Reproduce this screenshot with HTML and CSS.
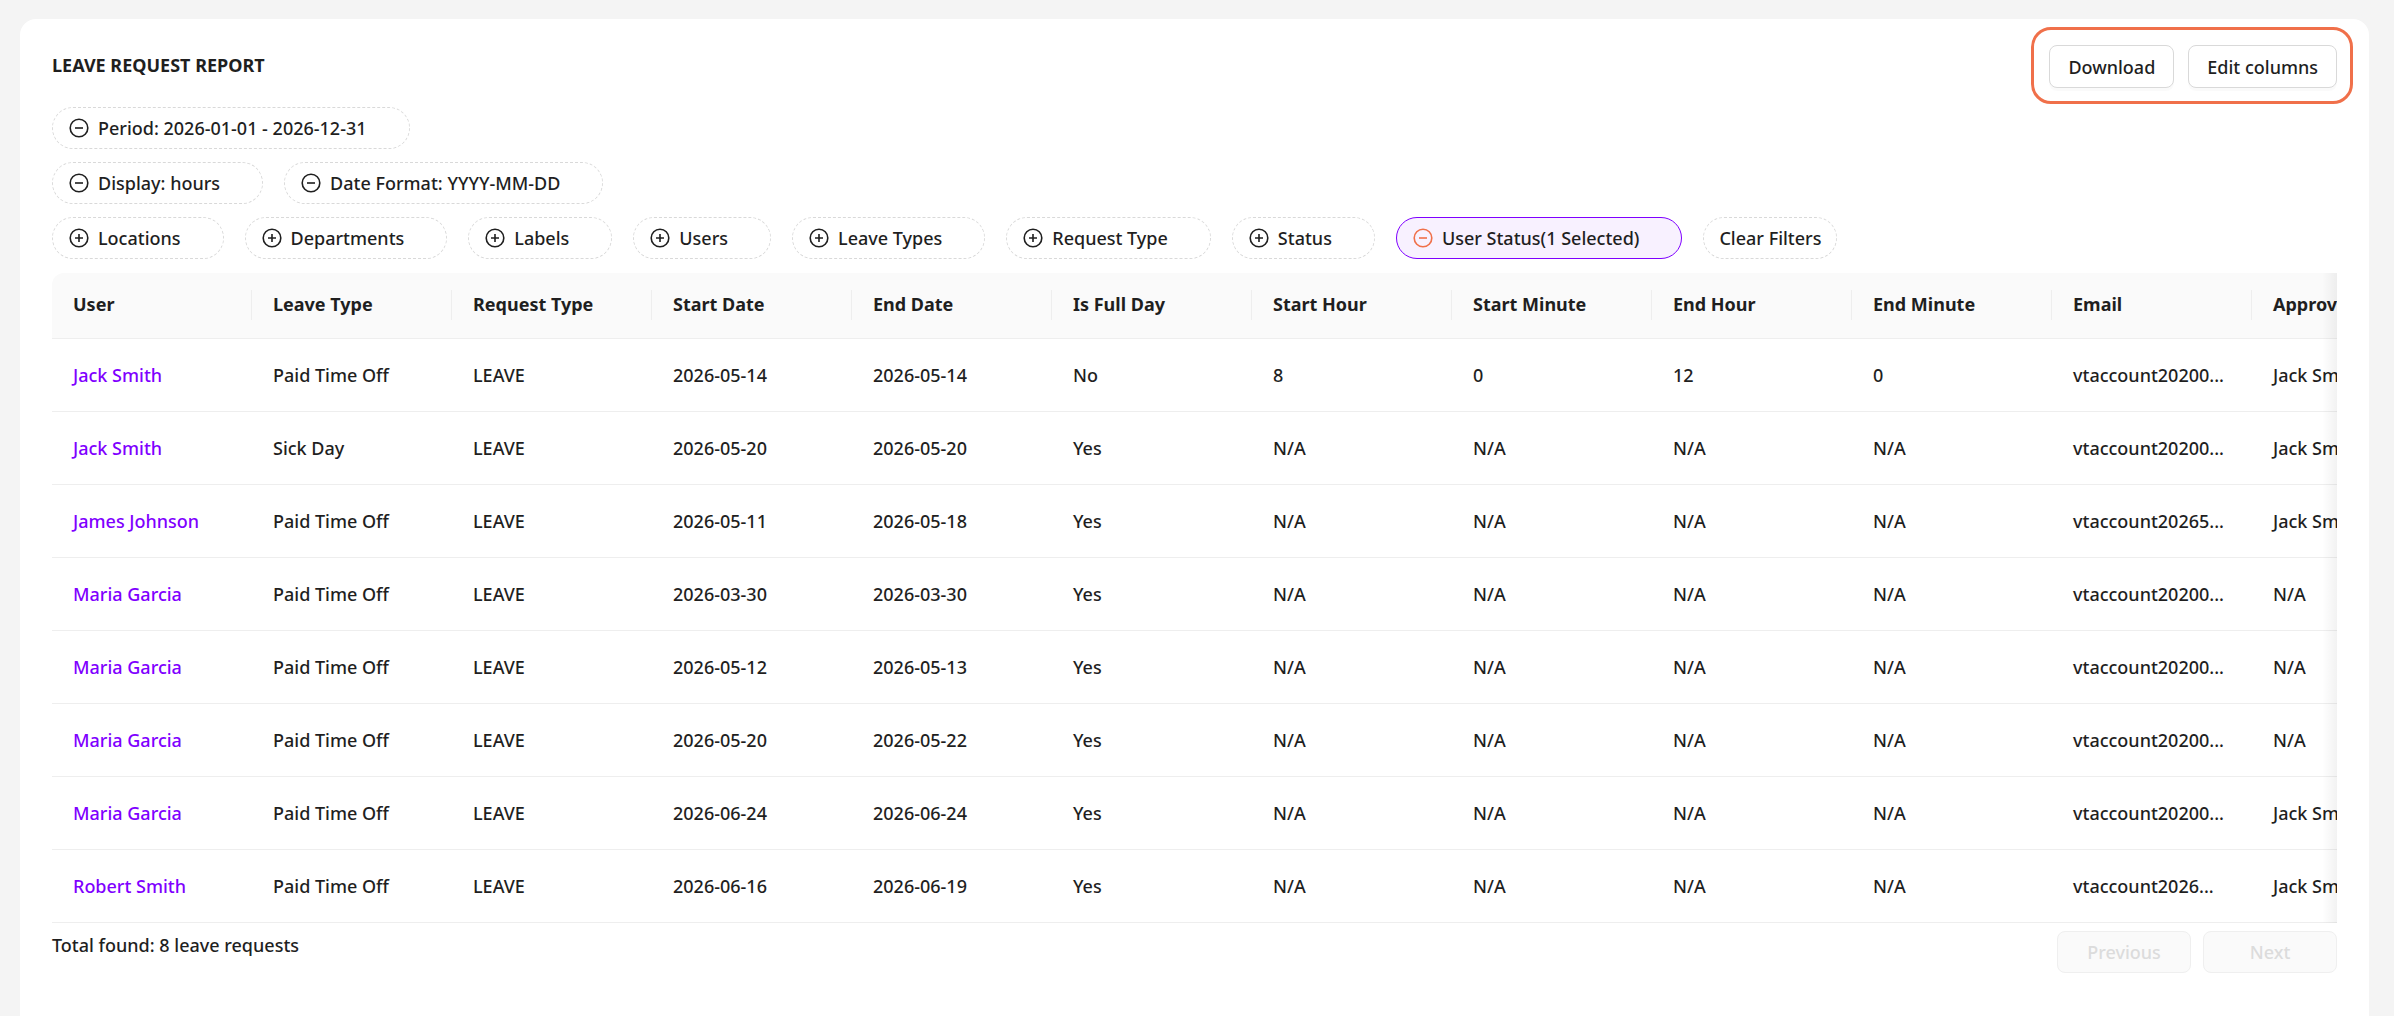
FILE: index.html
```html
<!DOCTYPE html>
<html lang="en">
<head>
<meta charset="utf-8">
<meta name="viewport" content="width=device-width, initial-scale=1">
<title>Leave request report</title>
<link rel="stylesheet" href="styles.css">
</head>
<body>
<svg class="sprite" aria-hidden="true">
  <symbol id="minus" viewBox="0 0 20 20"><circle cx="10" cy="10" r="8.8"/><path d="M6 10h8"/></symbol>
  <symbol id="plus" viewBox="0 0 20 20"><circle cx="10" cy="10" r="8.8"/><path d="M6 10h8M10 6v8"/></symbol>
</svg>
<main class="card">
  <header class="card-header">
    <h1 class="title">LEAVE REQUEST REPORT</h1>
    <div class="actions">
      <button type="button" class="btn">Download</button>
      <button type="button" class="btn">Edit columns</button>
    </div>
  </header>

  <section class="filters" aria-label="Filters">
    <div class="filter-row">
      <button type="button" class="pill"><svg class="icon"><use href="#minus"/></svg>Period: 2026-01-01 - 2026-12-31</button>
    </div>
    <div class="filter-row">
      <button type="button" class="pill"><svg class="icon"><use href="#minus"/></svg>Display: hours</button>
      <button type="button" class="pill"><svg class="icon"><use href="#minus"/></svg>Date Format: YYYY-MM-DD</button>
    </div>
    <div class="filter-row">
      <button type="button" class="pill"><svg class="icon"><use href="#plus"/></svg>Locations</button>
      <button type="button" class="pill"><svg class="icon"><use href="#plus"/></svg>Departments</button>
      <button type="button" class="pill"><svg class="icon"><use href="#plus"/></svg>Labels</button>
      <button type="button" class="pill"><svg class="icon"><use href="#plus"/></svg>Users</button>
      <button type="button" class="pill"><svg class="icon"><use href="#plus"/></svg>Leave Types</button>
      <button type="button" class="pill"><svg class="icon"><use href="#plus"/></svg>Request Type</button>
      <button type="button" class="pill"><svg class="icon"><use href="#plus"/></svg>Status</button>
      <button type="button" class="pill pill-active"><svg class="icon"><use href="#minus"/></svg>User Status(1 Selected)</button>
      <button type="button" class="pill pill-clear">Clear Filters</button>
    </div>
  </section>

  <div class="table-wrap">
    <div class="table-scroll">
      <table class="report">
        <thead>
          <tr><th scope="col">User</th><th scope="col">Leave Type</th><th scope="col">Request Type</th><th scope="col">Start Date</th><th scope="col">End Date</th><th scope="col">Is Full Day</th><th scope="col">Start Hour</th><th scope="col">Start Minute</th><th scope="col">End Hour</th><th scope="col">End Minute</th><th scope="col">Email</th><th scope="col">Approver</th></tr>
        </thead>
        <tbody>
          <tr><td><a href="#">Jack Smith</a></td><td>Paid Time Off</td><td>LEAVE</td><td>2026-05-14</td><td>2026-05-14</td><td>No</td><td>8</td><td>0</td><td>12</td><td>0</td><td>vtaccount20200...</td><td>Jack Smith</td></tr>
          <tr><td><a href="#">Jack Smith</a></td><td>Sick Day</td><td>LEAVE</td><td>2026-05-20</td><td>2026-05-20</td><td>Yes</td><td>N/A</td><td>N/A</td><td>N/A</td><td>N/A</td><td>vtaccount20200...</td><td>Jack Smith</td></tr>
          <tr><td><a href="#">James Johnson</a></td><td>Paid Time Off</td><td>LEAVE</td><td>2026-05-11</td><td>2026-05-18</td><td>Yes</td><td>N/A</td><td>N/A</td><td>N/A</td><td>N/A</td><td>vtaccount20265...</td><td>Jack Smith</td></tr>
          <tr><td><a href="#">Maria Garcia</a></td><td>Paid Time Off</td><td>LEAVE</td><td>2026-03-30</td><td>2026-03-30</td><td>Yes</td><td>N/A</td><td>N/A</td><td>N/A</td><td>N/A</td><td>vtaccount20200...</td><td>N/A</td></tr>
          <tr><td><a href="#">Maria Garcia</a></td><td>Paid Time Off</td><td>LEAVE</td><td>2026-05-12</td><td>2026-05-13</td><td>Yes</td><td>N/A</td><td>N/A</td><td>N/A</td><td>N/A</td><td>vtaccount20200...</td><td>N/A</td></tr>
          <tr><td><a href="#">Maria Garcia</a></td><td>Paid Time Off</td><td>LEAVE</td><td>2026-05-20</td><td>2026-05-22</td><td>Yes</td><td>N/A</td><td>N/A</td><td>N/A</td><td>N/A</td><td>vtaccount20200...</td><td>N/A</td></tr>
          <tr><td><a href="#">Maria Garcia</a></td><td>Paid Time Off</td><td>LEAVE</td><td>2026-06-24</td><td>2026-06-24</td><td>Yes</td><td>N/A</td><td>N/A</td><td>N/A</td><td>N/A</td><td>vtaccount20200...</td><td>Jack Smith</td></tr>
          <tr><td><a href="#">Robert Smith</a></td><td>Paid Time Off</td><td>LEAVE</td><td>2026-06-16</td><td>2026-06-19</td><td>Yes</td><td>N/A</td><td>N/A</td><td>N/A</td><td>N/A</td><td>vtaccount2026...</td><td>Jack Smith</td></tr>
        </tbody>
      </table>
    </div>
  </div>

  <footer class="card-footer">
    <p class="total">Total found: 8 leave requests</p>
    <div class="pager">
      <button type="button" class="btn" disabled>Previous</button>
      <button type="button" class="btn" disabled>Next</button>
    </div>
  </footer>
</main>
</body>
</html>
```
FILE: styles.css
```css
* {
  box-sizing: border-box;
}

body {
  margin: 0;
  display: flex;
  min-height: 100vh;
  padding: 19px 25px 0 20px;
  background: #f4f4f4;
  color: #1f1f1f;
  font: 500 18px/28px "Noto Sans", sans-serif;
}

button {
  font: inherit;
  color: inherit;
  cursor: pointer;
}

.sprite {
  position: absolute;
  width: 0;
  height: 0;
}

.card {
  flex: 1;
  min-width: 0;
  padding: 26px 32px;
  background: #fff;
  border-radius: 16px 16px 0 0;
}

.card-header {
  display: flex;
  justify-content: space-between;
  align-items: center;
  margin-bottom: 19px;
}

.title {
  margin: 0;
  padding-bottom: 3px;
  font-size: 18px;
  font-weight: 700;
}

.actions {
  position: relative;
  display: flex;
  gap: 14px;
}

/* Highlight ring drawn around the header actions */
.actions::after {
  content: "";
  position: absolute;
  inset: -18px -16px -16px -18px;
  border: 3px solid #f0704a;
  border-radius: 20px;
  pointer-events: none;
}

.btn {
  height: 43px;
  padding: 0 18px;
  background: #fff;
  border: 1px solid #d9d9d9;
  border-radius: 8px;
  box-shadow: 0 3px 0 rgba(0, 0, 0, 0.02);
}

.btn:disabled {
  width: 134px;
  height: 42px;
  background: #fafafa;
  border-color: #efefef;
  color: #dcdcdc;
  box-shadow: none;
  cursor: default;
}

.filters {
  display: flex;
  flex-direction: column;
  gap: 13px;
  margin-bottom: 14px;
}

.filter-row {
  display: flex;
  gap: 21px;
}

.pill {
  display: flex;
  align-items: center;
  gap: 9px;
  height: 42px;
  padding: 0 42px 0 16px;
  background: #fff;
  border: 1px dashed #d9d9d9;
  border-radius: 21px;
  white-space: nowrap;
}

.pill-active {
  background: #f8f1ff;
  border: 1px solid #7f00ff;
}

.pill-clear {
  padding: 0 15px;
}

.icon {
  width: 20px;
  height: 20px;
  flex: none;
  fill: none;
  stroke: #1f1f1f;
  stroke-width: 1.6;
}

.pill-active .icon {
  stroke: #f0704a;
}

.table-wrap {
  position: relative;
  border-radius: 12px 0 0 0;
  overflow: hidden;
}

.table-scroll {
  overflow-x: auto;
  scrollbar-width: none;
}

.table-wrap::after {
  content: "";
  position: absolute;
  inset: 0 0 0 auto;
  width: 15px;
  background: linear-gradient(to right, rgba(0, 0, 0, 0), rgba(0, 0, 0, 0.05));
  pointer-events: none;
}

.report {
  width: 2400px;
  table-layout: fixed;
  border-collapse: separate;
  border-spacing: 0;
}

.report th,
.report td {
  padding: 0 21px;
  border-bottom: 1px solid #eee;
  text-align: left;
  white-space: nowrap;
}

.report th {
  height: 66px;
  padding-bottom: 3px;
  font-weight: 700;
  background: #fafafa linear-gradient(#eee, #eee) right 17px / 1px 30px no-repeat;
}

.report td {
  height: 73px;
  padding-bottom: 1px;
}

.report a {
  color: #7f00ff;
  text-decoration: none;
}

.card-footer {
  display: flex;
  justify-content: space-between;
  align-items: flex-start;
  padding-top: 8px;
}

.total {
  margin: 0;
}

.pager {
  display: flex;
  gap: 12px;
}
```
